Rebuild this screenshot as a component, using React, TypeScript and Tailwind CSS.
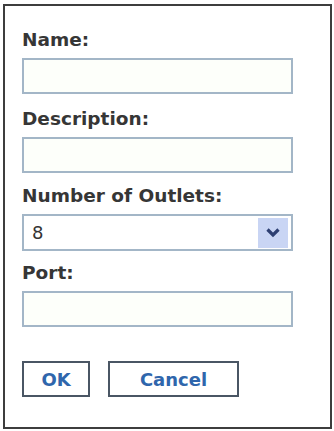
const font = { fontFamily: '"DejaVu Sans", Verdana, sans-serif' }

function Field({
  label,
  className,
  children
}: {
  label: string
  className?: string
  children: React.ReactNode
}) {
  return (
    <div className={`flex flex-col ${className ?? ''}`}>
      <label className="h-[22px] text-[18.5px] leading-[22px] font-bold text-[#363636]">
        {label}
      </label>
      <div className="mt-[7px]">{children}</div>
    </div>
  )
}

function TextBox() {
  return (
    <div className="h-[36px] w-[271px] border-2 border-[#a3b6c7] bg-[#fdfffa]" />
  )
}

export default function App() {
  return (
    <div className="h-[431px] w-[334px] bg-white pt-[4px] pl-[3px]" style={font}>
      <div className="flex h-[425px] w-[329px] flex-col border-2 border-[#3d3d3d] pt-[23px] pl-[17px]">
        <Field label="Name:">
          <TextBox />
        </Field>
        <Field label="Description:" className="mt-[14px]">
          <TextBox />
        </Field>
        <Field label="Number of Outlets:" className="mt-[12px]">
          <div className="flex h-[37px] w-[271px] items-center justify-between border-2 border-[#a3b6c7] bg-white pr-[3px] pl-[8px]">
            <span className="text-[18px] text-[#333]">8</span>
            <div className="flex h-[30px] w-[30px] items-center justify-center bg-[#c9d5f4]">
              <svg width="16" height="11" viewBox="0 0 16 11">
                <path
                  d="M2.5 2.5 L8 8 L13.5 2.5"
                  fill="none"
                  stroke="#2d3f72"
                  strokeWidth="3.2"
                />
              </svg>
            </div>
          </div>
        </Field>
        <Field label="Port:" className="mt-[11px]">
          <TextBox />
        </Field>
        <div className="mt-[34px] flex gap-[18px]">
          <button className="h-[36px] w-[68px] border-2 border-[#4a5664] bg-white text-[18px] font-bold text-[#2f66ac]">
            OK
          </button>
          <button className="h-[36px] w-[131px] border-2 border-[#4a5664] bg-white text-[18px] font-bold text-[#2f66ac]">
            Cancel
          </button>
        </div>
      </div>
    </div>
  )
}
